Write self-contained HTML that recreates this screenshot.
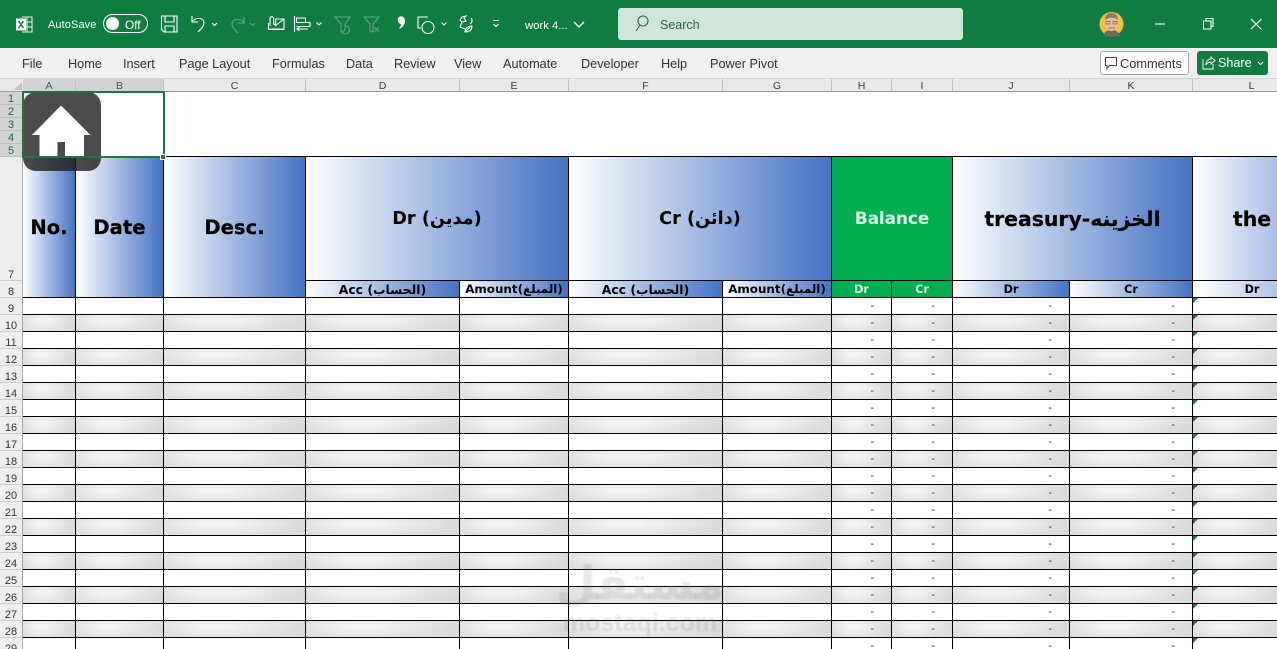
<!DOCTYPE html>
<html><head><meta charset="utf-8"><style>
*{box-sizing:border-box;margin:0;padding:0}
html,body{width:1277px;height:649px;overflow:hidden;background:#fff}
body{position:relative;font-family:"Liberation Sans",sans-serif}
.a{position:absolute}
#title{left:0;top:0;width:1277px;height:48px;background:#107c41;color:#fff}
#tabs{left:0;top:48px;width:1277px;height:31px;background:#f0f0f0;border-bottom:1px solid #d4d4d4;box-shadow:0 1px 2px rgba(0,0,0,.12)}
#tabs span{position:absolute;top:9px;font-size:12.7px;line-height:15px;color:#303030;white-space:nowrap}
#cols{left:0;top:79px;width:1277px;height:13px;background:#e9e9e9;border-bottom:1px solid #9c9c9c}
#cols span{position:absolute;top:0;height:12px;font-size:10.5px;line-height:14px;text-align:center;color:#3a3a3a;border-right:1px solid #c2c2c2}
#rows{left:0;top:92px;width:23px;height:557px;background:#eeeeee;border-right:1px solid #a8a8a8}
#rows span{position:absolute;left:0;width:22px;font-size:11px;text-align:center;color:#333;border-bottom:1px solid #cccccc;display:flex;align-items:flex-end;justify-content:center;line-height:10px;padding-bottom:0}
#rows span.s{background:#d3d3d3;color:#1f6a43;border-bottom:1px solid #bdbdbd}
.g{display:grid;grid-template-columns:53px 88px 142px 154px 109px 154px 109px 60px 61px 117px 123px 85px}
.r{position:absolute;left:23px;width:1254px;height:17px}
.r i{display:block;border-right:1px solid #000;border-bottom:1px solid #000;height:17px;font-style:normal;font-size:11px;line-height:16px;color:#333;text-align:right}
.r i.d{padding-right:17px}
.r i.t{position:relative;border-right:0}
.r i.t:before{content:"";position:absolute;left:0;top:0;border-top:5px solid #1c7a3c;border-right:5px solid transparent}
.r.y i{background:linear-gradient(90deg,rgba(214,214,214,.6) 0,rgba(214,214,214,0) 28%,rgba(214,214,214,0) 45%,rgba(214,214,214,.85) 100%),linear-gradient(180deg,#ebebeb 0,#f6f6f6 30%,#e5e5e5 100%)}
.h{position:absolute;border-right:1px solid #000;border-bottom:1px solid #000;background:linear-gradient(90deg,#fff 0,#4472c4 100%);display:flex;align-items:center;justify-content:center;font-family:"DejaVu Sans",sans-serif;font-weight:bold;color:#000;white-space:nowrap;overflow:hidden}
.m{font-size:19.6px;-webkit-text-stroke:.25px #000}
.n{font-size:17.7px}
.s8{font-size:12.4px;top:281px;height:17px}
.s9{font-size:11.9px}
.s7{font-size:11.2px}
.gr{background:#00ad4f;color:#d8f5e6}
</style></head><body>

<div class="a" id="title">
<div class="a" style="left:48px;top:18px;font-size:11px;line-height:14px;letter-spacing:.1px">AutoSave</div>
<div class="a" style="left:103px;top:14px;width:45px;height:19px;border:1px solid #fff;border-radius:10px"></div>
<div class="a" style="left:106px;top:17px;width:13px;height:13px;border-radius:50%;background:#fff"></div>
<div class="a" style="left:125px;top:18px;font-size:11.8px;line-height:14px">Off</div>
<div class="a" style="left:525px;top:19px;font-size:11.3px;line-height:14px">work 4...</div>
<div class="a" style="left:618px;top:8px;width:345px;height:32px;background:#cfe5d9;border-radius:3px"></div>
<div class="a" style="left:660px;top:18px;font-size:12.5px;line-height:15px;color:#2f6049">Search</div>
</div>

<svg class="a" style="left:0;top:0;z-index:3" width="1277" height="80" fill="none" stroke="#fff" stroke-width="1.1">
<!-- excel -->
<path d="M22 17h10v15H22M22 22h10M22 27h10M27 17v15" stroke="#e8f3ed"/>
<rect x="16" y="18.500" width="10" height="12" fill="#fff" stroke="none"/>
<path d="M18.500 21l5 7M23.500 21l-5 7" stroke="#107c41" stroke-width="1.500"/>
<!-- save -->
<path d="M161.500 16h15.500v16h-13l-2.500-2.500zM165 16v6h9v-6M165 32v-6h9v6"/>
<!-- undo -->
<path d="M192 16v6h6M192 22c3-5 12-5 12 1 0 3-3 6-6 9"/>
<path d="M212 23l2.500 2.500L217 23M316.500 22.500l2.500 2.500 2.500-2.500M441.500 22.500l2.500 2.500 2.500-2.500"/>
<!-- redo -->
<g stroke="#5fa680"><path d="M244 17v6h-6M244 23c-3-5-12-5-12 1 0 3 3 6 6 9"/><path d="M250 23l2.500 2.500L255 23"/>
<path d="M335 17h15l-5 7v6l-4 2v-8zM345 26a4 4 0 1 1-3 6"/>
<path d="M364 17h15l-6 7v8l-3-1v-7zM374 27l5 5M379 27l-5 5"/></g>
<!-- mail attach -->
<path d="M268.500 23v6h15.500V19h-9M275 26l9-7M268.500 29.500h15.500"/>
<path d="M270 26v-7.500a1.800 1.800 0 0 1 3.600 0v5a1 1 0 0 0 2 0v-4"/>
<!-- align -->
<path d="M294.500 16v16M296.500 18h9v4.500h-9zM296.500 22.500h13.500v4h-13.500M308 29h-10.500M299.500 27l-2.500 2 2.500 2"/>
<!-- comma -->
<path d="M398 18c2-3 7-2 7 3 0 4-3 7-6 8 1-2 2-3 2-5-2 0-4-3-3-6z" fill="#fff" stroke="none"/>
<!-- shapes -->
<path d="M428 17h-10v11h3"/><circle cx="428" cy="27.500" r="6"/>
<!-- leaf -->
<path d="M466 16l-2 2 2 3-4 1-2-2 2-3zM462 22l-2 5 5 2M471 18c2 2 1 5-1 6M472 26c0 4-3 6-7 6 0-4 3-6 7-6zM465 32l5-5"/>
<!-- qat dropdown -->
<path d="M493 20.500h6M493.500 24l2.500 2.500 2.500-2.500"/>
<!-- title chevron -->
<path d="M574 22l5 5 5-5" stroke-width="1.300"/>
<!-- search icon -->
<g stroke="#2f6049"><circle cx="643" cy="21" r="5"/><path d="M640 25l-4 6"/></g>
<!-- avatar -->
<circle cx="1111.500" cy="24" r="12" fill="#f1c23f" stroke="none"/>
<path d="M1103 36c1-4 4-6 8.500-6s7.500 2 8.500 6l-8 1z" fill="#6d6a55" stroke="none"/>
<ellipse cx="1111.500" cy="23" rx="6.500" ry="8" fill="#ecc0a2" stroke="none"/>
<path d="M1105 20c0-5 3-7 6.500-7s6.500 2 6.500 7c-3-3-10-3-13 0z" fill="#8b7a66" stroke="none"/>
<path d="M1106 21.500h4v2.500h-4zM1113 21.500h4v2.500h-4z" stroke="#7a6050" stroke-width=".7"/>
<path d="M1108 28h7" stroke="#b56a5a"/>
<!-- window -->
<path d="M1155 24h10"/>
<path d="M1203.500 21h7.500v8h-7.500zM1206 21v-2.500h7v8h-2"/>
<path d="M1251 19l10.500 10.500M1261.500 19L1251 29" stroke-width="1.200"/>
</svg>

<div class="a" id="tabs">
<span style="left:22px">File</span><span style="left:68px">Home</span><span style="left:123px">Insert</span><span style="left:179px">Page Layout</span><span style="left:272px">Formulas</span><span style="left:346px">Data</span><span style="left:394px">Review</span><span style="left:454px">View</span><span style="left:503px">Automate</span><span style="left:581px">Developer</span><span style="left:661px">Help</span><span style="left:710px">Power Pivot</span>
<div class="a" style="left:1100px;top:3px;width:89px;height:24px;background:#fff;border:1px solid #a9a9a9;border-radius:3px"></div>
<span style="left:1120px;top:8px;font-size:12.8px;color:#333">Comments</span>
<div class="a" style="left:1197px;top:3px;width:71px;height:24px;background:#107c41;border-radius:3px"></div>
<span style="left:1218px;top:8px;font-size:12.6px;color:#fff">Share</span>
<svg class="a" style="left:0;top:0" width="1277" height="31" fill="none">
<path d="M1105.500 9.500h11v8h-7l-2.500 3v-3h-1.500z" stroke="#444" stroke-width="1"/>
<path d="M1203 11v10h10v-5M1206 17c0-4 2-6 5-6V9l4 3.500-4 3.500v-2c-2 0-4 1-5 3z" stroke="#fff" stroke-width=".9"/>
<path d="M1258 14l2.500 2.500L1263 14" stroke="#fff" stroke-width="1"/>
</svg>
</div>

<div class="a" id="cols">
<div class="a" style="left:14px;top:3px;border-bottom:8px solid #c4c4c4;border-left:8px solid transparent"></div>
<span style="left:23px;width:53px;background:#d3d3d3;color:#1f6a43">A</span><span style="left:76px;width:88px;background:#d3d3d3;color:#1f6a43">B</span><span style="left:164px;width:142px">C</span><span style="left:306px;width:154px">D</span><span style="left:460px;width:109px">E</span><span style="left:569px;width:154px">F</span><span style="left:723px;width:109px">G</span><span style="left:832px;width:60px">H</span><span style="left:892px;width:61px">I</span><span style="left:953px;width:117px">J</span><span style="left:1070px;width:123px">K</span><span style="left:1193px;width:118px">L</span>
</div>

<div class="a" id="rows">
<span class="s" style="top:0;height:13px">1</span><span class="s" style="top:13px;height:13px">2</span><span class="s" style="top:26px;height:13px">3</span><span class="s" style="top:39px;height:13px">4</span><span class="s" style="top:52px;height:13px">5</span>
<span style="top:65px;height:124px">7</span><span style="top:189px;height:17px">8</span>
<span style="top:206px;height:17px">9</span><span style="top:223px;height:17px">10</span><span style="top:240px;height:17px">11</span><span style="top:257px;height:17px">12</span><span style="top:274px;height:17px">13</span><span style="top:291px;height:17px">14</span><span style="top:308px;height:17px">15</span><span style="top:325px;height:17px">16</span><span style="top:342px;height:17px">17</span><span style="top:359px;height:17px">18</span><span style="top:376px;height:17px">19</span><span style="top:393px;height:17px">20</span><span style="top:410px;height:17px">21</span><span style="top:427px;height:17px">22</span><span style="top:444px;height:17px">23</span><span style="top:461px;height:17px">24</span><span style="top:478px;height:17px">25</span><span style="top:495px;height:17px">26</span><span style="top:512px;height:17px">27</span><span style="top:529px;height:17px">28</span><span style="top:546px;height:17px">29</span>
</div>

<!-- top header line -->
<div class="a" style="left:23px;top:156px;width:1254px;height:1px;background:#000"></div>

<div class="h m" style="left:23px;top:157px;width:53px;height:141px;padding-top:1px">No.</div>
<div class="h m" style="left:76px;top:157px;width:88px;height:141px;padding-top:1px">Date</div>
<div class="h m" style="left:164px;top:157px;width:142px;height:141px;padding-top:1px">Desc.</div>
<div class="h n" style="left:306px;top:157px;width:263px;height:124px">Dr (مدين)</div>
<div class="h n" style="left:569px;top:157px;width:263px;height:124px">Cr (دائن)</div>
<div class="h gr" style="left:832px;top:157px;width:121px;height:124px;font-size:17px;letter-spacing:-.15px">Balance</div>
<div class="h" style="left:953px;top:157px;width:240px;height:124px;font-size:20.400px;-webkit-text-stroke:.2px #000">treasury-الخزينه</div>
<div class="h" style="left:1193px;top:157px;width:84px;height:124px;border-right:0;background:linear-gradient(90deg,#fff 0,#a9bde6 100%);justify-content:flex-start;padding:0 0 0 40px;font-size:20.400px;-webkit-text-stroke:.2px #000">the Bank</div>

<div class="h s8" style="left:306px;width:154px">Acc (الحساب)</div>
<div class="h s8 s9" style="left:460px;width:109px">Amount(المبلغ)</div>
<div class="h s8" style="left:569px;width:154px">Acc (الحساب)</div>
<div class="h s8 s9" style="left:723px;width:109px">Amount(المبلغ)</div>
<div class="h s8 s7 gr" style="left:832px;width:60px">Dr</div>
<div class="h s8 s7 gr" style="left:892px;width:61px">Cr</div>
<div class="h s8 s7" style="left:953px;width:117px">Dr</div>
<div class="h s8 s7" style="left:1070px;width:123px">Cr</div>
<div class="h s8 s7" style="left:1193px;width:118px;border-right:0;background:linear-gradient(90deg,#fff 0,#fff 5%,#8ea8dc 100%)">Dr</div>

<div class="r g" style="top:298px"><i></i><i></i><i></i><i></i><i></i><i></i><i></i><i class="d">-</i><i class="d">-</i><i class="d">-</i><i class="d">-</i><i class="t"></i></div>
<div class="r g y" style="top:315px"><i></i><i></i><i></i><i></i><i></i><i></i><i></i><i class="d">-</i><i class="d">-</i><i class="d">-</i><i class="d">-</i><i class="t"></i></div>
<div class="r g" style="top:332px"><i></i><i></i><i></i><i></i><i></i><i></i><i></i><i class="d">-</i><i class="d">-</i><i class="d">-</i><i class="d">-</i><i class="t"></i></div>
<div class="r g y" style="top:349px"><i></i><i></i><i></i><i></i><i></i><i></i><i></i><i class="d">-</i><i class="d">-</i><i class="d">-</i><i class="d">-</i><i class="t"></i></div>
<div class="r g" style="top:366px"><i></i><i></i><i></i><i></i><i></i><i></i><i></i><i class="d">-</i><i class="d">-</i><i class="d">-</i><i class="d">-</i><i class="t"></i></div>
<div class="r g y" style="top:383px"><i></i><i></i><i></i><i></i><i></i><i></i><i></i><i class="d">-</i><i class="d">-</i><i class="d">-</i><i class="d">-</i><i class="t"></i></div>
<div class="r g" style="top:400px"><i></i><i></i><i></i><i></i><i></i><i></i><i></i><i class="d">-</i><i class="d">-</i><i class="d">-</i><i class="d">-</i><i class="t"></i></div>
<div class="r g y" style="top:417px"><i></i><i></i><i></i><i></i><i></i><i></i><i></i><i class="d">-</i><i class="d">-</i><i class="d">-</i><i class="d">-</i><i class="t"></i></div>
<div class="r g" style="top:434px"><i></i><i></i><i></i><i></i><i></i><i></i><i></i><i class="d">-</i><i class="d">-</i><i class="d">-</i><i class="d">-</i><i class="t"></i></div>
<div class="r g y" style="top:451px"><i></i><i></i><i></i><i></i><i></i><i></i><i></i><i class="d">-</i><i class="d">-</i><i class="d">-</i><i class="d">-</i><i class="t"></i></div>
<div class="r g" style="top:468px"><i></i><i></i><i></i><i></i><i></i><i></i><i></i><i class="d">-</i><i class="d">-</i><i class="d">-</i><i class="d">-</i><i class="t"></i></div>
<div class="r g y" style="top:485px"><i></i><i></i><i></i><i></i><i></i><i></i><i></i><i class="d">-</i><i class="d">-</i><i class="d">-</i><i class="d">-</i><i class="t"></i></div>
<div class="r g" style="top:502px"><i></i><i></i><i></i><i></i><i></i><i></i><i></i><i class="d">-</i><i class="d">-</i><i class="d">-</i><i class="d">-</i><i class="t"></i></div>
<div class="r g y" style="top:519px"><i></i><i></i><i></i><i></i><i></i><i></i><i></i><i class="d">-</i><i class="d">-</i><i class="d">-</i><i class="d">-</i><i class="t"></i></div>
<div class="r g" style="top:536px"><i></i><i></i><i></i><i></i><i></i><i></i><i></i><i class="d">-</i><i class="d">-</i><i class="d">-</i><i class="d">-</i><i class="t"></i></div>
<div class="r g y" style="top:553px"><i></i><i></i><i></i><i></i><i></i><i></i><i></i><i class="d">-</i><i class="d">-</i><i class="d">-</i><i class="d">-</i><i class="t"></i></div>
<div class="r g" style="top:570px"><i></i><i></i><i></i><i></i><i></i><i></i><i></i><i class="d">-</i><i class="d">-</i><i class="d">-</i><i class="d">-</i><i class="t"></i></div>
<div class="r g y" style="top:587px"><i></i><i></i><i></i><i></i><i></i><i></i><i></i><i class="d">-</i><i class="d">-</i><i class="d">-</i><i class="d">-</i><i class="t"></i></div>
<div class="r g" style="top:604px"><i></i><i></i><i></i><i></i><i></i><i></i><i></i><i class="d">-</i><i class="d">-</i><i class="d">-</i><i class="d">-</i><i class="t"></i></div>
<div class="r g y" style="top:621px"><i></i><i></i><i></i><i></i><i></i><i></i><i></i><i class="d">-</i><i class="d">-</i><i class="d">-</i><i class="d">-</i><i class="t"></i></div>
<div class="r g" style="top:638px"><i></i><i></i><i></i><i></i><i></i><i></i><i></i><i class="d">-</i><i class="d">-</i><i class="d">-</i><i class="d">-</i><i class="t"></i></div>

<!-- home icon -->
<svg class="a" style="left:22px;top:91px;z-index:4" width="80" height="82">
<rect x="1" y="1" width="78" height="79" rx="13" fill="rgba(30,30,30,.8)"/>
<path d="M39 14.500L68.500 44H62V65H17.500V44H10z" fill="#fff"/>
<rect x="35.500" y="51" width="7.500" height="14" fill="#4a4a4a"/>
</svg>
<!-- selection -->
<div class="a" style="left:22px;top:91px;width:143px;height:67px;border:2px solid #217346;z-index:5"></div>
<div class="a" style="left:160px;top:154px;width:6px;height:6px;background:#217346;border:1px solid #fff;z-index:6"></div>

<!-- watermark -->
<div class="a" style="left:540px;top:548px;width:200px;text-align:center;font-family:'DejaVu Sans',sans-serif;font-weight:bold;font-size:46px;line-height:70px;color:rgba(110,110,110,.17);z-index:7;filter:blur(.7px)">مستقل</div>
<div class="a" style="left:540px;top:609px;width:200px;text-align:center;font-family:'Liberation Sans',sans-serif;font-weight:bold;font-size:25px;line-height:28px;color:rgba(110,110,110,.17);z-index:7;filter:blur(.7px)">mostaqi.com</div>
</body></html>
